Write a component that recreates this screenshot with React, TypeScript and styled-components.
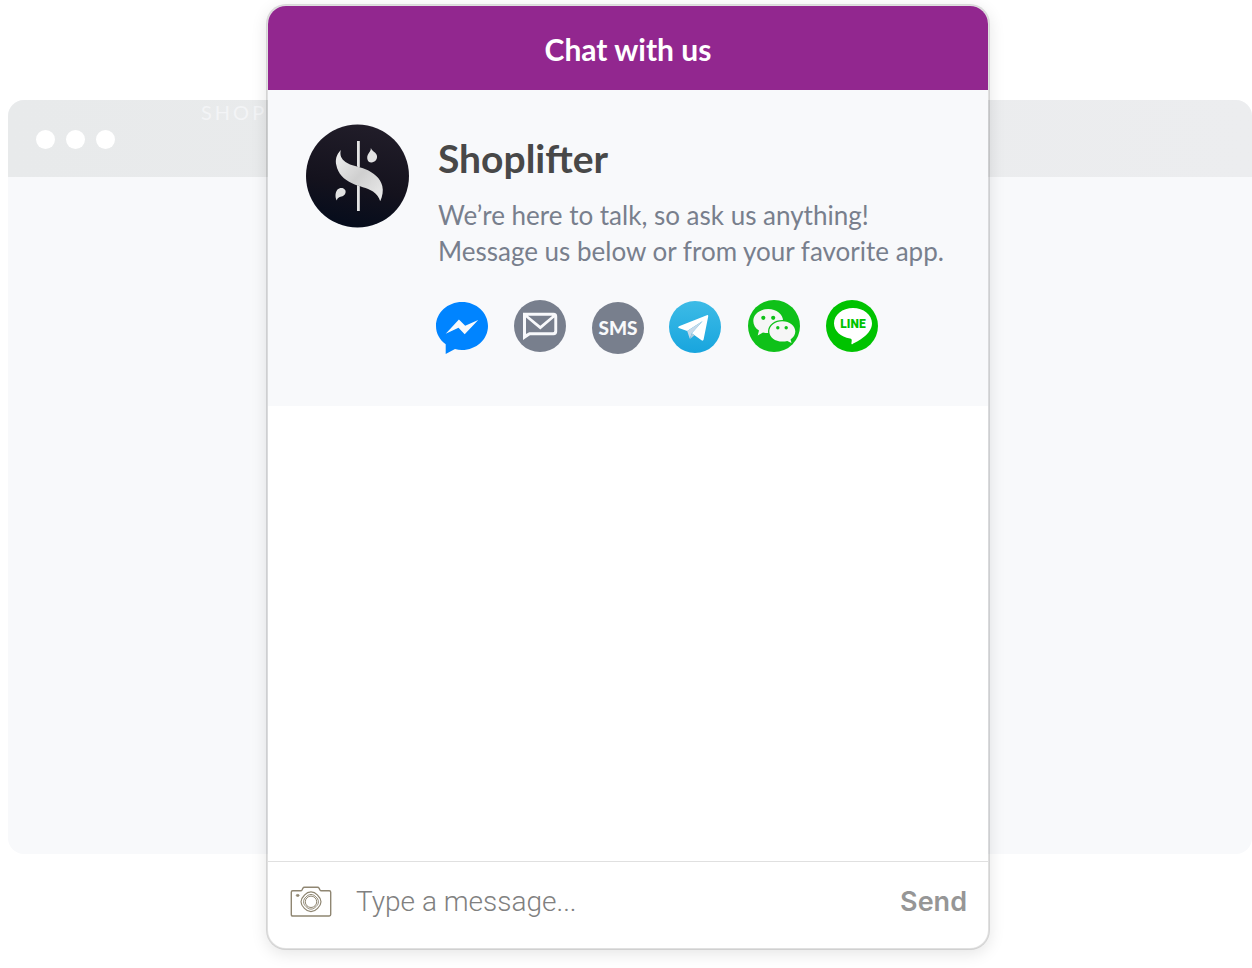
import React from "react";
import styled, { createGlobalStyle } from "styled-components";

const GlobalStyle = createGlobalStyle`
  *, *::before, *::after { box-sizing: border-box; }
  body {
    margin: 0;
    background: #ffffff;
    font-family: Lato, "Liberation Sans", sans-serif;
  }
`;

const Stage = styled.main`
  display: grid;
  align-items: start;
  min-height: 100vh;
  padding: 4px 0 18px 4px;
`;

const BrowserWindow = styled.div`
  grid-area: 1 / 1;
  min-height: 754px;
  margin: 96px 0 0 4px;
  border-radius: 16px;
  overflow: hidden;
  background: #f8f9fb;
`;

const TitleBar = styled.div`
  display: flex;
  align-items: flex-start;
  gap: 86px;
  height: 77px;
  padding: 0 28px;
  background: linear-gradient(90deg, #e8eaeb, #ecedef);
`;

const Dots = styled.div`
  display: flex;
  gap: 11px;
  padding-top: 30px;
`;

const Dot = styled.span`
  width: 19px;
  height: 19px;
  border-radius: 50%;
  background: #ffffff;
`;

const SiteName = styled.span`
  color: #f3f4f6;
  font-size: 20px;
  line-height: 24px;
  letter-spacing: 3px;
`;

const ChatCard = styled.section`
  grid-area: 1 / 1;
  justify-self: center;
  z-index: 1;
  display: flex;
  flex-direction: column;
  width: 100%;
  max-width: 724px;
  min-height: 946px;
  border: 2px solid rgba(0, 0, 0, 0.12);
  border-radius: 20px;
  overflow: hidden;
  background: #ffffff;
  background-clip: padding-box;
  box-shadow: 0 4px 16px rgba(0, 0, 0, 0.1);
`;

const CardHeader = styled.header`
  padding: 25px 24px 23px;
  background: #92278f;
  color: #ffffff;
  text-align: center;
`;

const CardTitle = styled.h1`
  margin: 0;
  font-size: 30px;
  font-weight: 700;
  line-height: 36px;
`;

const Intro = styled.div`
  display: flex;
  gap: 28px;
  padding: 34px 38px 52px;
  background: #f8f9fb;
`;

const Avatar = styled.svg`
  flex: none;
  width: 104px;
  height: 104px;
`;

const IntroBody = styled.div`
  padding-top: 11px;
`;

const BrandName = styled.h2`
  margin: 0 0 16px;
  color: #484848;
  font-size: 39px;
  font-weight: 700;
  line-height: 46px;
`;

const Description = styled.p`
  margin: 0;
  color: #787f8d;
  font-size: 26px;
  line-height: 36px;
`;

const Channels = styled.div`
  display: flex;
  gap: 26px;
  margin: 31px 0 0 -2px;
`;

const ChannelLink = styled.a`
  display: block;
  width: 52px;
  height: 54px;
`;

const ChannelIcon = styled.svg`
  display: block;
  width: 52px;
  height: 54px;
  overflow: visible;
`;

const Messages = styled.div`
  flex: 1;
`;

const Composer = styled.form`
  display: flex;
  align-items: center;
  gap: 24px;
  padding: 22px 21px 28px 22px;
  border-top: 1px solid #e0e0e0;
`;

const PlainButton = styled.button`
  flex: none;
  padding: 0;
  border: 0;
  background: none;
  cursor: pointer;
`;

const CameraIcon = styled.svg`
  display: block;
  width: 42px;
  height: 32px;
`;

const MessageInput = styled.input`
  flex: 1;
  min-width: 0;
  height: 36px;
  padding: 0;
  border: 0;
  outline: 0;
  background: none;
  color: #484848;
  font: 300 28px/36px Roboto, "Liberation Sans", sans-serif;

  &::placeholder {
    color: #808080;
    opacity: 1;
  }
`;

const SendButton = styled(PlainButton)`
  color: #969696;
  font: 600 27px/36px Inter, "Liberation Sans", sans-serif;
`;

function BrandAvatar() {
  return (
    <Avatar viewBox="0 0 104 104" role="img" aria-label="Shoplifter logo">
      <defs>
        <linearGradient id="night" x1="0.6" y1="0" x2="0.4" y2="1">
          <stop offset="0" stopColor="#211d29" />
          <stop offset="0.6" stopColor="#14121d" />
          <stop offset="1" stopColor="#050c1c" />
        </linearGradient>
        <linearGradient id="silver" x1="0" y1="0" x2="1" y2="1">
          <stop offset="0" stopColor="#f1f1f1" />
          <stop offset="0.5" stopColor="#cfcfcf" />
          <stop offset="1" stopColor="#ececec" />
        </linearGradient>
      </defs>
      <circle cx="51.5" cy="52" r="51.5" fill="url(#night)" />
      <path d="M51 17h2.8v26.500l-2.800-1zM51 61l2.800 1.200V87H51z" fill="#e4e4e4" />
      <path
        d="M34.800 26C30 31 29.200 36 30.300 41C32 50 38 55.500 46 59.200C53 62.500 61 63.500 67 67.500C71 70.200 73 73.500 74.200 77.300C76.500 72 77.500 67 76.300 62C74.500 54 67.500 48.500 59.500 45.200C53 42.500 45 42 39.500 38C35.500 35 33.500 31.500 34.800 26z"
        fill="url(#silver)"
      />
      <path
        d="M64.800 23.800C65.500 27.500 61 29.500 61.200 34.200C61.400 37 63.300 38.600 65.500 38.500C69 38.300 71.400 35.300 71 32C70.500 28.300 66.300 28 64.800 23.800z"
        fill="#e2e2e2"
      />
      <path
        d="M30.800 76.500C29 73.500 29 68.500 31.500 65.500C33.500 63.400 37.500 63.300 39.200 66C40.300 68.200 39.200 71.200 36.500 72.200C33.800 73 31.500 73.200 30.800 76.500z"
        fill="#e2e2e2"
      />
    </Avatar>
  );
}

function MessengerIcon() {
  return (
    <ChannelIcon viewBox="0 0 52 54" aria-hidden="true">
      <path
        d="M26 2C11.600 2 0 12.700 0 26c0 7.500 3.700 14 9.700 18.300V54l9.300-4.900c2.200.6 4.600.9 7 .9 14.400 0 26-10.700 26-24S40.400 2 26 2z"
        fill="#0084ff"
      />
      <path d="M9.700 33.700L22.900 19.600L29.200 25.700L42.200 20L28.700 34.300L22.500 27.700z" fill="#f8f9fb" />
    </ChannelIcon>
  );
}

function EmailIcon() {
  return (
    <ChannelIcon viewBox="0 0 52 54" aria-hidden="true">
      <circle cx="26" cy="26" r="26" fill="#787f8d" />
      <path
        d="M9 12.700H39.500a3.700 3.700 0 0 1 3.700 3.700V31.600a3.700 3.700 0 0 1-3.700 3.700H16L9 40zM12 17.500V34L15.200 32.300H38.800a1.500 1.500 0 0 0 1.500-1.500V17.500L26.300 29.500zM14 15.700L26.300 25.700L38.300 15.700z"
        fill="#f8f9fb"
        fillRule="evenodd"
      />
    </ChannelIcon>
  );
}

function SmsIcon() {
  return (
    <ChannelIcon viewBox="0 0 52 54" aria-hidden="true">
      <circle cx="26" cy="28" r="26" fill="#787f8d" />
      <text x="26" y="35" textAnchor="middle" fontSize="19" fontWeight="900" fill="#f8f9fb">
        SMS
      </text>
    </ChannelIcon>
  );
}

function TelegramIcon() {
  return (
    <ChannelIcon viewBox="0 0 52 54" aria-hidden="true">
      <defs>
        <linearGradient id="sky" x1="0" y1="0" x2="0" y2="1">
          <stop offset="0" stopColor="#3dbbe6" />
          <stop offset="1" stopColor="#18a5de" />
        </linearGradient>
      </defs>
      <circle cx="25" cy="27" r="26" fill="url(#sky)" />
      <path
        d="M36.800 15.200Q38.500 14.700 38.200 16.500L33.600 39.500Q33.200 41.300 31.500 40.300L21.800 33.300L32.700 21L17.200 31.100L8.800 28Q7.200 27.200 9 26.300z"
        fill="#ffffff"
      />
      <path d="M17.200 31.100L32.700 21L21.800 33.300L19.800 38.800z" fill="#c8daea" />
      <path d="M21.800 33.300L20 39L24.500 35.200z" fill="#b4cddd" />
    </ChannelIcon>
  );
}

function WeChatIcon() {
  return (
    <ChannelIcon viewBox="0 0 52 54" aria-hidden="true">
      <circle cx="26" cy="26" r="26" fill="#0fc119" />
      <path
        d="M20.200 9C11.900 9 5.300 14.300 5.300 21c0 3.900 2.200 7.300 5.700 9.500l-1.300 4.900 5.300-2.900c1.600.4 3.400.6 5.200.6 8.300 0 14.900-5.400 14.900-12.100S28.500 9 20.200 9z"
        fill="#f6f6f6"
      />
      <path
        d="M34.300 21.300c7.200 0 13 4.500 13 10.200 0 3.200-1.900 6.100-4.800 7.900l1 3.600-4.200-2.100c-1.500.5-3.200.7-5 .7-7.200 0-13-4.500-13-10.100s5.800-10.200 13-10.200z"
        fill="#f6f6f6"
        stroke="#0fc119"
        strokeWidth="2.600"
        strokeLinejoin="round"
        paintOrder="stroke"
      />
      <g fill="#0fc119">
        <circle cx="15.300" cy="17.800" r="2.100" />
        <circle cx="25.200" cy="17.800" r="2.100" />
        <circle cx="29.800" cy="27.800" r="1.700" />
        <circle cx="38.200" cy="27.800" r="1.700" />
      </g>
    </ChannelIcon>
  );
}

function LineIcon() {
  return (
    <ChannelIcon viewBox="0 0 52 54" aria-hidden="true">
      <circle cx="26" cy="26" r="26" fill="#00c300" />
      <path
        d="M27 8C16.500 8 8 14.700 8 23.300c0 7.700 6.700 13.900 16 15.200 1.400.3 1.900 1 1.700 2.400l-.3 2.300c-.1.900.4 1.200 1.300.7C31.500 41.500 46 34.500 46 23.300 46 14.700 37.500 8 27 8z"
        fill="#ffffff"
      />
      <text
        x="27"
        y="28"
        textAnchor="middle"
        fontFamily="Roboto, sans-serif"
        fontSize="12"
        fontWeight="900"
        fill="#00c300"
      >
        LINE
      </text>
    </ChannelIcon>
  );
}

const channels = [
  { name: "Messenger", Icon: MessengerIcon },
  { name: "Email", Icon: EmailIcon },
  { name: "SMS", Icon: SmsIcon },
  { name: "Telegram", Icon: TelegramIcon },
  { name: "WeChat", Icon: WeChatIcon },
  { name: "LINE", Icon: LineIcon },
];

export default function App() {
  return (
    <>
      <GlobalStyle />
      <Stage>
        <BrowserWindow aria-hidden="true">
          <TitleBar>
            <Dots>
              <Dot />
              <Dot />
              <Dot />
            </Dots>
            <SiteName>SHOP</SiteName>
          </TitleBar>
        </BrowserWindow>
        <ChatCard>
          <CardHeader>
            <CardTitle>Chat with us</CardTitle>
          </CardHeader>
          <Intro>
            <BrandAvatar />
            <IntroBody>
              <BrandName>Shoplifter</BrandName>
              <Description>
                We’re here to talk, so ask us anything!
                <br />
                Message us below or from your favorite app.
              </Description>
              <Channels>
                {channels.map(({ name, Icon }) => (
                  <ChannelLink key={name} href="#" aria-label={name}>
                    <Icon />
                  </ChannelLink>
                ))}
              </Channels>
            </IntroBody>
          </Intro>
          <Messages />
          <Composer onSubmit={(event: React.FormEvent) => event.preventDefault()}>
            <PlainButton type="button" aria-label="Add a photo">
              <CameraIcon viewBox="0 0 42 32" fill="none" stroke="#8f8672" strokeWidth="1.400" aria-hidden="true">
                <path d="M2.700 4.800H10.500Q11.700 4.800 12.200 3.700L12.800 2.300Q13.400 1.300 14.500 1.300H27.500Q28.600 1.300 29.200 2.300L29.800 3.700Q30.300 4.800 31.500 4.800H39.300Q40.700 4.800 40.700 6.200V28.600Q40.700 30 39.300 30H2.700Q1.300 30 1.300 28.600V6.200Q1.300 4.800 2.700 4.800z" />
                <path
                  d="M21 5.900C24 5.900 25.800 7.300 27.600 9.200C29.500 11 31 13 31 15.800C31 18.600 29.500 20.600 27.600 22.400C25.800 24.300 24 25.700 21 25.700C18 25.700 16.200 24.300 14.400 22.400C12.500 20.600 11 18.600 11 15.800C11 13 12.500 11 14.400 9.200C16.200 7.300 18 5.900 21 5.900z"
                  strokeWidth="1.200"
                />
                <path
                  d="M21 8.500C23.200 8.500 24.600 9.600 25.900 10.900C27.300 12.200 28.400 13.600 28.400 15.800C28.400 18 27.300 19.400 25.900 20.700C24.600 22 23.200 23.100 21 23.100C18.800 23.100 17.400 22 16.100 20.700C14.700 19.400 13.600 18 13.600 15.800C13.600 13.600 14.700 12.200 16.100 10.900C17.400 9.600 18.800 8.500 21 8.500z"
                  strokeWidth="1"
                />
                <circle cx="21" cy="15.800" r="5.700" strokeWidth="1" />
                <ellipse cx="7.700" cy="9.400" rx="1.500" ry="1" fill="#8f8672" strokeWidth="0.800" />
              </CameraIcon>
            </PlainButton>
            <MessageInput type="text" aria-label="Message" placeholder="Type a message..." />
            <SendButton type="submit">Send</SendButton>
          </Composer>
        </ChatCard>
      </Stage>
    </>
  );
}
